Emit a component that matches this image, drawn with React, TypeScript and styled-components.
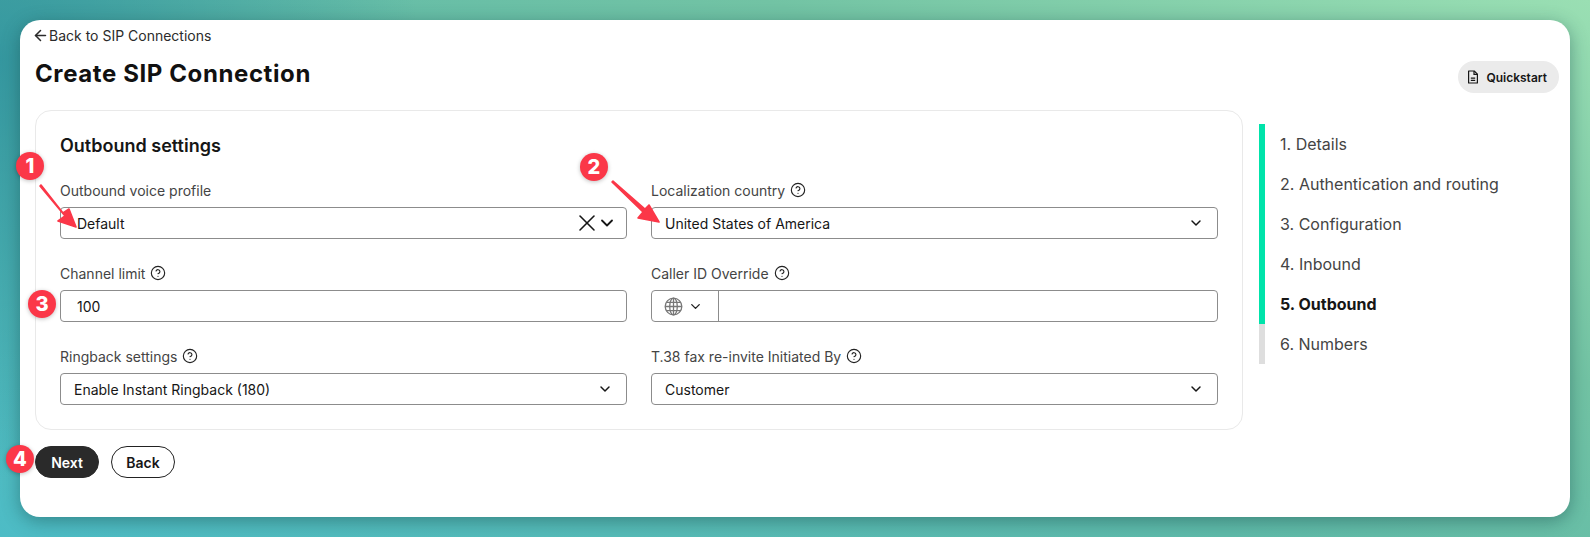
import React from "react";
import styled, { createGlobalStyle } from "styled-components";
import { ArrowLeft, ChevronDown, CircleHelp, X } from "lucide-react";

const Global = createGlobalStyle`
  html, body { margin: 0; padding: 0; }
  body {
    font-family: Inter, "Liberation Sans", sans-serif;
    color: #161616;
    -webkit-font-smoothing: antialiased;
  }
  * { box-sizing: border-box; }
`;

const Backdrop = styled.div`
  width: 1590px;
  height: 537px;
  padding: 20px;
  overflow: hidden;
  background:
    radial-gradient(ellipse 420px 420px at 0 60px, rgba(40, 140, 155, 0.75), rgba(40, 140, 155, 0) 100%),
    linear-gradient(25deg, #4dbcc6 0%, #5fbaa9 45%, #72c3a4 70%, #9adfb3 100%);
`;

const Card = styled.main`
  position: relative;
  height: 497px;
  padding: 5px 11px 0 15px;
  background: #fff;
  border-radius: 20px;
  box-shadow: 0 4px 18px rgba(20, 70, 70, 0.45);
`;

const BackLink = styled.a`
  display: flex;
  align-items: center;
  height: 20px;
  font-size: 14px;
  color: #2b2b2b;
  svg { margin-left: -3px; }
`;

const Header = styled.header`
  display: flex;
  justify-content: space-between;
  align-items: flex-start;
  margin-top: 16px;
`;

const Title = styled.h1`
  margin: -3px 0 0;
  font-size: 24px;
  line-height: 32px;
  font-weight: 700;
  letter-spacing: 0.6px;
  color: #111;
`;

const Quickstart = styled.button`
  display: flex;
  align-items: center;
  gap: 6px;
  height: 32px;
  padding: 0 12px 0 8px;
  border: 0;
  border-radius: 16px;
  background: #ebebeb;
  font: 600 12px Inter, sans-serif;
  color: #161616;
`;

const Body = styled.div`
  display: flex;
  align-items: flex-start;
  margin-top: 17px;
`;

const Panel = styled.section`
  width: 1208px;
  height: 320px;
  padding: 24px;
  border: 1px solid #e9e9e9;
  border-radius: 16px;
`;

const PanelTitle = styled.h2`
  margin: -1px 0 0;
  height: 24px;
  font-size: 18px;
  line-height: 24px;
  font-weight: 600;
  color: #161616;
`;

const FieldGrid = styled.div`
  display: grid;
  grid-template-columns: 567px 567px;
  column-gap: 24px;
  row-gap: 17px;
  margin-top: 15px;
`;

const Field = styled.div`
  display: flex;
  flex-direction: column;
`;

const Label = styled.label`
  display: flex;
  align-items: center;
  gap: 5px;
  height: 34px;
  font-size: 14px;
  color: #444;
  svg { color: #222; }
`;

const Control = styled.div<{ $pad?: number }>`
  display: flex;
  align-items: center;
  height: 32px;
  padding: 0 14px 0 ${(p) => p.$pad ?? 13}px;
  border: 1px solid #8c8c8c;
  border-radius: 4px;
  font-size: 14px;
  color: #161616;
`;

const Value = styled.span`
  flex: 1;
`;

const SelectChevron = styled(ChevronDown)`
  margin-right: -1px;
`;

const ClearIcon = styled(X)`
  margin-right: -4px;
`;

const ProfileChevron = styled(ChevronDown)`
  margin-right: -5px;
`;

const PhoneControl = styled(Control)`
  padding: 0;
`;

const CountryPicker = styled.div`
  display: flex;
  align-items: center;
  gap: 5px;
  width: 67px;
  height: 100%;
  padding-left: 12px;
  border-right: 1px solid #8c8c8c;
  color: #777;
  svg:last-child { color: #222; }
`;

const Actions = styled.div`
  display: flex;
  gap: 12px;
  margin-top: 16px;
`;

const Pill = styled.button<{ $primary?: boolean }>`
  width: 64px;
  height: 32px;
  border-radius: 16px;
  border: 1px solid ${(p) => (p.$primary ? "#2a2a2a" : "#222")};
  background: ${(p) => (p.$primary ? "#2a2a2a" : "#fff")};
  color: ${(p) => (p.$primary ? "#fff" : "#161616")};
  font: 600 14px Inter, sans-serif;
`;

const Stepper = styled.ol`
  list-style: none;
  margin: 14px 0 0 16px;
  padding: 0;
`;

const Step = styled.li<{ $done?: boolean; $current?: boolean }>`
  display: flex;
  align-items: center;
  height: 40px;
  padding-left: 15px;
  border-left: 6px solid ${(p) => (p.$done ? "#00e3aa" : "#dedede")};
  font-size: 16px;
  font-weight: ${(p) => (p.$current ? 700 : 400)};
  color: ${(p) => (p.$current ? "#161616" : "#444")};
`;

const Badge = styled.span<{ $x: number; $y: number }>`
  position: absolute;
  left: ${(p) => p.$x - 34}px;
  top: ${(p) => p.$y - 34}px;
  display: flex;
  align-items: center;
  justify-content: center;
  width: 28px;
  height: 28px;
  border-radius: 50%;
  background: #fb3748;
  color: #fff;
  font-size: 20px;
  font-weight: 800;
  box-shadow: 0 1px 4px rgba(0, 0, 0, 0.25);
`;

const ArrowLayer = styled.svg`
  position: absolute;
  left: -20px;
  top: -20px;
  width: 1590px;
  height: 537px;
  pointer-events: none;
`;

const DocIcon = () => (
  <svg width="14" height="14" viewBox="0 0 14 14" fill="none" stroke="#161616" strokeWidth="1.2">
    <path d="M2.6 1h5.6l3.2 3.2V13H2.6z" strokeLinejoin="round" />
    <path d="M8 1v3.4h3.4M4.8 8.2h4.4M4.8 10.4h4.4" />
  </svg>
);

const GlobeIcon = () => (
  <svg width="19" height="19" viewBox="0 0 18 18" fill="none" stroke="currentColor" strokeWidth="1.2">
    <circle cx="9" cy="9" r="7.9" />
    <ellipse cx="9" cy="9" rx="3.6" ry="7.9" />
    <path d="M9 1.1v15.8M1.1 9h15.8M2.2 5.2h13.6M2.2 12.8h13.6" />
  </svg>
);

const Help = () => <CircleHelp size={16} strokeWidth={1.7} />;

const steps = ["Details", "Authentication and routing", "Configuration", "Inbound", "Outbound", "Numbers"];

export default function App() {
  return (
    <>
      <Global />
      <Backdrop>
        <Card>
          <BackLink>
            <ArrowLeft size={17} strokeWidth={2.2} />
            Back to SIP Connections
          </BackLink>
          <Header>
            <Title>Create SIP Connection</Title>
            <Quickstart>
              <DocIcon />
              Quickstart
            </Quickstart>
          </Header>
          <Body>
            <div>
              <Panel>
                <PanelTitle>Outbound settings</PanelTitle>
                <FieldGrid>
                  <Field>
                    <Label>Outbound voice profile</Label>
                    <Control $pad={16}>
                      <Value>Default</Value>
                      <ClearIcon size={28} strokeWidth={1.3} />
                      <ProfileChevron size={20} strokeWidth={2.2} />
                    </Control>
                  </Field>
                  <Field>
                    <Label>
                      Localization country <Help />
                    </Label>
                    <Control>
                      <Value>United States of America</Value>
                      <SelectChevron size={16} strokeWidth={2.2} />
                    </Control>
                  </Field>
                  <Field>
                    <Label>
                      Channel limit <Help />
                    </Label>
                    <Control $pad={16}>
                      <Value>100</Value>
                    </Control>
                  </Field>
                  <Field>
                    <Label>
                      Caller ID Override <Help />
                    </Label>
                    <PhoneControl>
                      <CountryPicker>
                        <GlobeIcon />
                        <ChevronDown size={15} strokeWidth={2.2} />
                      </CountryPicker>
                    </PhoneControl>
                  </Field>
                  <Field>
                    <Label>
                      Ringback settings <Help />
                    </Label>
                    <Control>
                      <Value>Enable Instant Ringback (180)</Value>
                      <SelectChevron size={16} strokeWidth={2.2} />
                    </Control>
                  </Field>
                  <Field>
                    <Label>
                      T.38 fax re-invite Initiated By <Help />
                    </Label>
                    <Control>
                      <Value>Customer</Value>
                      <SelectChevron size={16} strokeWidth={2.2} />
                    </Control>
                  </Field>
                </FieldGrid>
              </Panel>
              <Actions>
                <Pill $primary>Next</Pill>
                <Pill>Back</Pill>
              </Actions>
            </div>
            <Stepper>
              {steps.map((s, i) => (
                <Step key={s} $done={i < 5} $current={i === 4}>
                  {i + 1}. {s}
                </Step>
              ))}
            </Stepper>
          </Body>
          <ArrowLayer viewBox="0 0 1590 537">
            <path d="M40 186 L65 216 L58 221 L76 227 L69 209 L63 213 L41 185z" fill="#fb3748" stroke="#fb3748" strokeWidth="1.6" strokeLinejoin="round" />
            <path d="M612 182 L643 212 L638 218 L659 222 L649 205 L645 209 L613 181z" fill="#fb3748" stroke="#fb3748" strokeWidth="1.6" strokeLinejoin="round" />
          </ArrowLayer>
          <Badge $x={30} $y={166}>1</Badge>
          <Badge $x={594} $y={167}>2</Badge>
          <Badge $x={42} $y={304}>3</Badge>
          <Badge $x={20} $y={459}>4</Badge>
        </Card>
      </Backdrop>
    </>
  );
}
